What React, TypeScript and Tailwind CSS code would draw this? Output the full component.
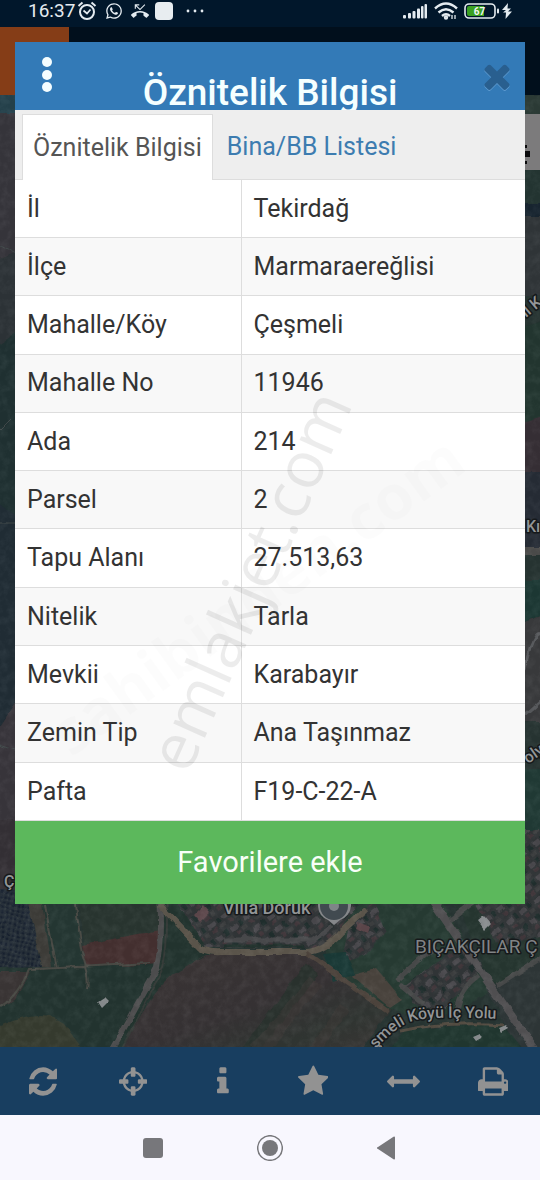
import { useState } from "react";
import { FaWhatsapp } from "react-icons/fa";
import { MdPhoneMissed } from "react-icons/md";

interface Attribute {
  label: string;
  value: string;
}

const attributes: Attribute[] = [
  { label: "İl", value: "Tekirdağ" },
  { label: "İlçe", value: "Marmaraereğlisi" },
  { label: "Mahalle/Köy", value: "Çeşmeli" },
  { label: "Mahalle No", value: "11946" },
  { label: "Ada", value: "214" },
  { label: "Parsel", value: "2" },
  { label: "Tapu Alanı", value: "27.513,63" },
  { label: "Nitelik", value: "Tarla" },
  { label: "Mevkii", value: "Karabayır" },
  { label: "Zemin Tip", value: "Ana Taşınmaz" },
  { label: "Pafta", value: "F19-C-22-A" },
];

const tools = [
  {
    name: "Yenile",
    width: 1536,
    path: "M1511 1056q0 5-1 7-64 268-268 434.5t-478 166.5q-146 0-282.5-55t-243.5-157l-129 129q-19 19-45 19t-45-19-19-45v-448q0-26 19-45t45-19h448q26 0 45 19t19 45-19 45l-137 137q71 66 161 102t187 36q134 0 250-65t186-179q11-17 53-117 8-23 30-23h192q13 0 22.5 9.5t9.5 22.5zm25-800v448q0 26-19 45t-45 19h-448q-26 0-45-19t-19-45 19-45l138-138q-148-137-349-137-134 0-250 65t-186 179q-11 17-53 117-8 23-30 23h-199q-13 0-22.5-9.5t-9.5-22.5v-7q65-268 270-434.5t480-166.5q146 0 284 55.5t245 156.5l130-129q19-19 45-19t45 19 19 45z",
  },
  {
    name: "Konum",
    width: 1536,
    path: "M1197 1024h-109q-26 0-45-19t-19-45v-128q0-26 19-45t45-19h109q-32-108-112.5-188.5t-188.5-112.5v109q0 26-19 45t-45 19h-128q-26 0-45-19t-19-45v-109q-108 32-188.5 112.5t-112.5 188.5h109q26 0 45 19t19 45v128q0 26-19 45t-45 19h-109q32 108 112.5 188.5t188.5 112.5v-109q0-26 19-45t45-19h128q26 0 45 19t19 45v109q108-32 188.5-112.5t112.5-188.5zm339-192v128q0 26-19 45t-45 19h-143q-37 161-154.5 278.5t-278.5 154.5v143q0 26-19 45t-45 19h-128q-26 0-45-19t-19-45v-143q-161-37-278.5-154.5t-154.5-278.5h-143q-26 0-45-19t-19-45v-128q0-26 19-45t45-19h143q37-161 154.5-278.5t278.5-154.5v-143q0-26 19-45t45-19h128q26 0 45 19t19 45v143q161 37 278.5 154.5t154.5 278.5h143q26 0 45 19t19 45z",
  },
  {
    name: "Bilgi",
    width: 640,
    path: "M640 1344v128q0 26-19 45t-45 19h-512q-26 0-45-19t-19-45v-128q0-26 19-45t45-19h64v-384h-64q-26 0-45-19t-19-45v-128q0-26 19-45t45-19h384q26 0 45 19t19 45v576h64q26 0 45 19t19 45zm-128-1152v192q0 26-19 45t-45 19h-256q-26 0-45-19t-19-45v-192q0-26 19-45t45-19h256q26 0 45 19t19 45z",
  },
  {
    name: "Favoriler",
    width: 1664,
    path: "M1664 647q0 22-26 48l-363 354 86 500q1 7 1 20 0 21-10.5 35.5t-30.5 14.5q-19 0-40-12l-449-236-449 236q-22 12-40 12-21 0-31.5-14.5t-10.5-35.5q0-6 2-20l86-500-364-354q-25-27-25-48 0-37 56-46l502-73 225-455q19-41 49-41t49 41l225 455 502 73q56 9 56 46z",
  },
  {
    name: "Ölçüm",
    width: 1792,
    path: "M1792 896q0 26-19 45l-256 256q-19 19-45 19t-45-19-19-45v-128h-1024v128q0 26-19 45t-45 19-45-19l-256-256q-19-19-19-45t19-45l256-256q19-19 45-19t45 19 19 45v128h1024v-128q0-26 19-45t45-19 45 19l256 256q19 19 19 45z",
  },
  {
    name: "Yazdır",
    width: 1664,
    path: "M384 1536h896v-256h-896v256zm0-640h896v-384h-160q-40 0-68-28t-28-68v-160h-640v640zm1152 64q0-26-19-45t-45-19-45 19-19 45 19 45 45 19 45-19 19-45zm128 0v416q0 13-9.5 22.5t-22.5 9.5h-224v160q0 40-28 68t-68 28h-960q-40 0-68-28t-28-68v-160h-224q-13 0-22.5-9.5t-9.5-22.5v-416q0-79 56.5-135.5t135.5-56.5h64v-544q0-40 28-68t68-28h672q40 0 88 20t76 48l152 152q28 28 48 76t20 88v256h64q79 0 135.5 56.5t56.5 135.5z",
  },
];

const StatusBar = () => (
  <div className="flex h-[27px] items-start justify-between bg-[#01172b] pr-7 pl-7 text-[#e4ebf0]">
    <div className="flex h-[22px] items-center">
      <span className="w-[49px] text-[19px] leading-[22px]">16:37</span>
      <svg viewBox="0 0 20 20" className="h-5 w-5" fill="none" stroke="currentColor" strokeWidth="2">
        <circle cx="10" cy="11" r="7" />
        <path d="M1.500 5 5.500 1.500M18.500 5 14.500 1.500" />
        <path d="M6.500 9.500 10 12.500 13.500 8.500" strokeWidth="1.700" />
      </svg>
      <FaWhatsapp className="ml-2 h-[18px] w-[18px]" />
      <MdPhoneMissed className="ml-2 h-[18px] w-[18px]" />
      <span className="ml-1.5 h-[18px] w-[18px] rounded-sm bg-[#e8edf0]" />
      <svg viewBox="0 0 20 4" className="ml-3 h-1 w-5" fill="currentColor">
        <circle cx="3" cy="2" r="1.400" />
        <circle cx="10" cy="2" r="1.400" />
        <circle cx="17" cy="2" r="1.400" />
      </svg>
    </div>
    <div className="flex h-[22px] items-center">
      <svg viewBox="0 0 25 16" className="h-4 w-[25px]" fill="currentColor">
        <rect x="0" y="12" width="3" height="3.500" rx="1" />
        <rect x="5" y="10" width="3" height="5.500" rx="1" />
        <rect x="9.500" y="8" width="3" height="7.500" rx="1" />
        <rect x="14" y="5.500" width="3" height="10" rx="1" />
        <rect x="18" y="3" width="2.500" height="12.500" rx="1" />
        <rect x="21.500" y="1" width="2.500" height="14.500" rx="1" />
      </svg>
      <svg viewBox="0 0 24 18" className="ml-1.5 h-[18px] w-6" fill="none" stroke="currentColor" strokeWidth="2.400">
        <path d="M1 6.500Q12-3.500 23 6.500M4.500 10.500Q12 4 19.500 10.500M8 14Q12 10.500 16 14" />
        <circle cx="12" cy="15.500" r="1" />
        <path d="M18 13v4M21 13v4" strokeWidth="1.300" />
      </svg>
      <svg viewBox="0 0 36 16" className="ml-1.5 h-4 w-9">
        <rect x="1" y="1" width="30" height="14" rx="4" fill="none" stroke="#e4ebf0" strokeWidth="1.600" />
        <path d="M5 3h15v10H5a2 2 0 0 1-2-2V5a2 2 0 0 1 2-2z" fill="#3aa022" />
        <rect x="33" y="5.500" width="2" height="5" rx="1" fill="#e4ebf0" />
        <text x="15.500" y="11.500" textAnchor="middle" fontSize="10" fontWeight="700" fill="#f2f7f2">67</text>
      </svg>
      <svg viewBox="0 0 10 16" className="ml-0.5 h-4 w-[10px]" fill="currentColor">
        <path d="M6 0 0 7h4L1 9.500h3L3.500 16 10 8.500H6L9 5.500H5.500z" />
      </svg>
    </div>
  </div>
);

const MapBackground = () => (
  <svg
    viewBox="0 95 540 952"
    preserveAspectRatio="xMidYMax slice"
    className="min-h-0 w-full flex-1"
    aria-hidden="true"
  >
    <defs>
      <pattern id="trees" width="5" height="5" patternUnits="userSpaceOnUse" patternTransform="rotate(12)">
        <rect width="5" height="5" fill="#252e37" />
        <circle cx="2" cy="2" r="1.400" fill="#17202e" />
        <circle cx="4.200" cy="4" r=".7" fill="#3b4346" />
      </pattern>
      <pattern id="houses" width="17" height="15" patternUnits="userSpaceOnUse" patternTransform="rotate(-38)">
        <rect width="17" height="15" fill="#303436" />
        <rect x="1" y="2" width="8" height="5" fill="#47464a" />
        <rect x="11" y="1" width="4" height="6" fill="#1f2d2c" />
        <rect x="3" y="9" width="5" height="4" fill="#40363a" />
        <rect x="10" y="9" width="6" height="4" fill="#3b3d3e" />
      </pattern>
      <linearGradient id="field" x1="0" y1="0" x2="1" y2="1">
        <stop offset="0" stopColor="#3a3434" />
        <stop offset=".5" stopColor="#353133" />
        <stop offset=".75" stopColor="#2f3431" />
        <stop offset="1" stopColor="#3b3635" />
      </linearGradient>
      {/* arazi dokusu: kenarları bozar, üzerine hafif gren ekler */}
      <filter id="terrain" x="0" y="0" width="100%" height="100%" colorInterpolationFilters="sRGB">
        <feTurbulence type="fractalNoise" baseFrequency=".07" numOctaves="2" seed="4" result="noise" />
        <feDisplacementMap in="SourceGraphic" in2="noise" scale="6" xChannelSelector="R" yChannelSelector="G" result="land" />
        <feGaussianBlur in="land" stdDeviation=".6" result="soft" />
        <feTurbulence type="fractalNoise" baseFrequency=".12" numOctaves="4" seed="9" />
        <feColorMatrix values=".6 0 0 0 -.24  .6 0 0 0 -.24  .6 0 0 0 -.24  0 0 0 0 1" result="grain" />
        <feComposite in="soft" in2="grain" operator="arithmetic" k1="0" k2="1" k3=".16" k4="0" />
      </filter>
      <path id="road-label" d="M376 1049Q398 1024 416 1020T500 1019" />
    </defs>

    <g filter="url(#terrain)">
      <rect x="-30" y="65" width="600" height="1012" fill="#263331" />

      {/* sol kenar */}
      <path d="M-9 95h33v18H-9z" fill="#24404a" />
      <path d="M-9 113h33v135L-9 262z" fill="#35343a" />
      <path d="M-9 262l33-14v80L-9 350z" fill="#2c3236" />
      <path d="M-9 350l33-22v190H-9z" fill="#1f3031" />
      <path d="M-9 500l33 20v170L-9 740z" fill="#202c34" />
      <path d="M-9 740l33-50v130H-9z" fill="#37343a" />
      <path d="M-9 820h33v90H-9z" fill="#332f34" />
      <path d="M0 245l15 8M0 430l15-15M0 522h15M0 745l15 5" stroke="#3e4647" />

      {/* sağ kenar */}
      <path d="M514 95h36v60h-36z" fill="#2b3a35" />
      <path d="M514 170h36v34h-36z" fill="#233431" />
      <path d="M514 204h36v12h-36z" fill="#17242f" />
      <path d="M514 216h36v80h-36z" fill="#2f3437" />
      <path d="M514 330l36-12v106h-36z" fill="#22352f" />
      <path d="M514 424l36-10v58h-36z" fill="#352e34" />
      <path d="M514 472h36v78h-36z" fill="#252b34" />
      <path d="M514 547h36v8h-36z" fill="#4a4a49" />
      <path d="M514 580h36v32l-36 12z" fill="#1c3733" />
      <path d="M514 624l36-12v110h-36z" fill="#38393b" />
      <path d="M524 670q10-40 16-36M524 715l16-14" stroke="#55575a" strokeWidth="3" fill="none" />
      <path d="M514 770h36v60h-36z" fill="#203934" />
      <path d="M514 830h36v75h-36z" fill="url(#houses)" />

      {/* tarlalar */}
      <path d="M-9 890h34l18 78H-9z" fill="url(#trees)" />
      <path d="M25 890h20l12 77H43z" fill="#3c3b37" />
      <path d="M40 890h34l10 77H52z" fill="#243632" />
      <path d="M76 890h84v58l-74 12z" fill="#28342f" />
      <path d="M82 945l78-15v34l-74 5z" fill="#432f2f" />
      <path d="M-9 968l169-3-45 90H-9z" fill="#22332f" />
      <path d="M-9 972h39L15 1000-9 1012z" fill="#393434" />
      <path d="M-9 1030q49-24 73-7l24 32H-9z" fill="#353a2e" />
      <path d="M165 890h20l30 64-48 42-36 59h-20l50-92z" fill="#22332e" />
      <path d="M205 955h108l78 54-34 46H120q29-62 54-81z" fill="url(#field)" />
      <path d="M305 964l14 10-62 81h-20z" fill="#29312d" />
      <path d="M250 1047l60-70 12 8-50 62zM310 1047l30-42 8 6-25 36z" fill="#413936" opacity=".4" />

      {/* yerleşim */}
      <path d="M170 890h200l-44 58H206z" fill="url(#houses)" />
      <path d="M326 948l44-58h64l62 100-60 30-52-12-58-44z" fill="#263a32" />
      <path d="M350 920l24-17 12 28-20 24-25 8z" fill="url(#houses)" />
      <path d="M405 985l55-40 24 20-42 47-30-8z" fill="url(#houses)" />
      <path d="M350 975l25-7 27 32-12 8z" fill="#48423c" />
      <path d="M323 954l22-2 10 22-20 7z" fill="#193835" />
      <path d="M450 890h100v75l-54 28z" fill="#25352f" />
      <path d="M470 890h80v43l-50 15z" fill="url(#houses)" />
      <path d="M487 990l63-38v103h-28z" fill="#2d3536" />
      <path d="M405 1030l97-7 26 32H384z" fill="#20362f" />

      {/* yollar */}
      <g fill="none">
        <path d="M160 895q3 45-3 73l-48 87" stroke="#4c4c4d" strokeWidth="6" />
        <path d="M166 895q3 45-3 73l-44 87" stroke="#343a37" strokeWidth="2" />
        <path d="M160 906l40 42q8 5 22 4h85q18-1 34-20l24-22" stroke="#5a544a" strokeWidth="6" />
        <path d="M224 940h88l20-14" stroke="#47484a" strokeWidth="5" />
        <path d="M224 946h80" stroke="#20302b" strokeWidth="3" />
        <path d="M306 953l28 20 54 38" stroke="#4c433c" strokeWidth="5" />
        <path d="M432 900l60 88 48 68" stroke="#4f4e50" strokeWidth="8" />
        <path d="M497 986l50-32M456 1010q4-22 22-34M396 980l40-34M400 984l24 20M450 920l26-20" stroke="#464848" strokeWidth="5" />
        <path d="M400 1031q45-10 104-6" stroke="#514a40" strokeWidth="3" />
        <path d="M0 1007q17-10 29-38l56-2q4 12 2 22M75 905q4 40 11 62M45 905l12 64M40 969l110-6" stroke="#474843" strokeWidth="2" />
      </g>
      <path d="M99 1002l6-4 4 4-6 6zM478 922l6-5 6 7-6 6zM499 1028l7-3 3 4-7 4zM473 1038l7-3 3 3-7 4z" fill="#85898b" />
      <path d="M358 923l12 5-2 6-12-5zM195 914l8-8 6 7-8 8z" fill="#5a4549" />
    </g>

    {/* harita kontrolü */}
    <path d="M520 114h20v56h-20z" fill="#7c7b7c" />
    <path d="M524 151h6v6h-6zM525 145h2v3h-2zM525 161h2v3h-2z" fill="#0b0b0d" />

    {/* işaretçi */}
    <path d="M318 906a16 16 0 0 0 10 14l6 5 6-5a16 16 0 0 0 11-14v-8h-33z" fill="#85878a" />
    <circle cx="334" cy="906" r="14" fill="#414a50" />
    <circle cx="334" cy="906" r="5" fill="#7f8588" />

    <g
      fill="#929596"
      stroke="#16191b"
      strokeWidth="3"
      paintOrder="stroke"
      fontSize="16"
      fontWeight="500"
      strokeLinejoin="round"
    >
      <text x="223" y="914" fontSize="18">Villa Doruk</text>
      <text x="415" y="953" fontSize="19" fontWeight="400" fill="#818486">BIÇAKÇILAR Ç</text>
      <text>
        <textPath href="#road-label">şmeli Köyü İç Yolu</textPath>
      </text>
      <text x="4" y="887">Ç</text>
      <text x="526" y="532">Kı</text>
      <text x="528" y="764" transform="rotate(-35 528 764)">oly</text>
      <text x="526" y="318" transform="rotate(-40 526 318)">il K</text>
    </g>
  </svg>
);

const Watermark = () => (
  <svg
    viewBox="0 0 510 862"
    className="pointer-events-none absolute inset-0 h-full w-full"
    fontFamily="'Open Sans', sans-serif"
    aria-hidden="true"
  >
    <text x="173" y="734" fontSize="65" fill="#000000" opacity=".07" transform="rotate(-66 173 734)">
      emlakjet.com
    </text>
    <text
      x="56"
      y="716"
      fontSize="62"
      fontWeight="700"
      fill="#000000"
      opacity=".006"
      transform="rotate(-36 56 716)"
    >
      sahibinden.com
    </text>
  </svg>
);

const App = () => {
  const [activeTab, setActiveTab] = useState("oznitelik");

  return (
    <div className="flex min-h-screen flex-col bg-[#01101f] font-[Roboto,sans-serif]">
      <StatusBar />

      <main className="relative flex-1">
        <div className="absolute inset-0 flex flex-col overflow-hidden">
          <div className="flex h-[68px] shrink-0 bg-[#010f1c]">
            <div className="w-[69px] bg-[#853d17]" />
          </div>
          <MapBackground />
        </div>

        <section
          role="dialog"
          aria-labelledby="dialog-title"
          className="relative mx-[15px] mt-[15px] mb-[143px] bg-white"
        >
          <header className="flex h-[68px] justify-between overflow-hidden bg-[#337ab7]">
            <button type="button" aria-label="Menü" className="flex w-16 justify-center pt-[15px]">
              <svg viewBox="0 0 10 36" className="h-9 w-[10px]" fill="#f4fdff">
                <circle cx="5" cy="5" r="5" />
                <circle cx="5" cy="18" r="5" />
                <circle cx="5" cy="30" r="5" />
              </svg>
            </button>
            <h1 id="dialog-title" className="pt-[33px] text-[37px] leading-9 font-medium whitespace-nowrap text-[#f5ffff]">
              Öznitelik Bilgisi
            </h1>
            <button type="button" aria-label="Kapat" className="flex w-16 justify-center pt-[15px] pl-2">
              <svg viewBox="0 0 1408 1792" className="h-[38px] w-[30px] drop-shadow-[0_1px_0_#5f9bd0]" fill="#295f8f">
                <path d="M1298 1322q0 40-28 68l-136 136q-28 28-68 28t-68-28l-294-294-294 294q-28 28-68 28t-68-28l-136-136q-28-28-28-68t28-68l294-294-294-294q-28-28-28-68t28-68l136-136q28-28 68-28t68 28l294 294 294-294q28-28 68-28t68 28l136 136q28 28 28 68t-28 68l-294 294 294 294q28 28 28 68z" />
              </svg>
            </button>
          </header>

          <div role="tablist" className="flex h-[70px] gap-1 border-b border-[#dddddd] bg-[#eeeeee] px-[7px] pt-1 text-[25px]">
            <button
              type="button"
              role="tab"
              aria-selected={activeTab === "oznitelik"}
              onClick={() => setActiveTab("oznitelik")}
              className="-mb-px border border-b-0 border-[#dddddd] bg-white px-[10px] whitespace-nowrap text-[#555555]"
            >
              Öznitelik Bilgisi
            </button>
            <button
              type="button"
              role="tab"
              aria-selected={activeTab === "bina"}
              onClick={() => setActiveTab("bina")}
              className="px-[10px] whitespace-nowrap text-[#3d7cb0]"
            >
              Bina/BB Listesi
            </button>
          </div>

          <table className="h-[641px] w-full table-fixed border-collapse text-[25px] text-[#333333]">
            <tbody>
              {attributes.map((item) => (
                <tr key={item.label} className="border-b border-[#dddddd] even:bg-[#f8f8f8]">
                  <th
                    scope="row"
                    className="w-[226px] border-r border-[#dddddd] px-3 text-left font-normal whitespace-nowrap"
                  >
                    {item.label}
                  </th>
                  <td className="px-3 whitespace-nowrap">{item.value}</td>
                </tr>
              ))}
            </tbody>
          </table>

          <button type="button" className="h-[83px] w-full bg-[#5cb85c] text-[29px] text-[#f8fff8]">
            Favorilere ekle
          </button>

          <Watermark />
        </section>
      </main>

      <nav className="relative grid h-[68px] grid-cols-6 bg-[#183e60]">
        {tools.map((tool) => (
          <button key={tool.name} type="button" aria-label={tool.name} className="flex items-center justify-center pr-1">
            <svg viewBox={`0 0 ${tool.width} 1792`} className="h-[33px]" fill="#929292">
              <path d={tool.path} />
            </svg>
          </button>
        ))}
      </nav>

      <div className="flex h-[65px] items-center justify-center gap-[91px] bg-[#f8f7fe] text-[#77777b]">
        <button type="button" aria-label="Son uygulamalar">
          <svg viewBox="0 0 26 26" className="h-[26px] w-[26px]" fill="currentColor">
            <rect x="3" y="3" width="20" height="20" rx="3" />
          </svg>
        </button>
        <button type="button" aria-label="Ana ekran">
          <svg viewBox="0 0 26 26" className="h-[26px] w-[26px]" fill="currentColor">
            <circle cx="13" cy="13" r="12.300" fill="none" stroke="currentColor" strokeWidth="1.500" />
            <circle cx="13" cy="13" r="8" />
          </svg>
        </button>
        <button type="button" aria-label="Geri">
          <svg viewBox="0 0 26 26" className="h-[26px] w-[26px]" fill="currentColor">
            <path d="M21 2.500v21a1 1 0 0 1-1.500.8L4 14a1 1 0 0 1 0-2L19.500 1.700A1 1 0 0 1 21 2.500z" />
          </svg>
        </button>
      </div>
    </div>
  );
};

export default App;
